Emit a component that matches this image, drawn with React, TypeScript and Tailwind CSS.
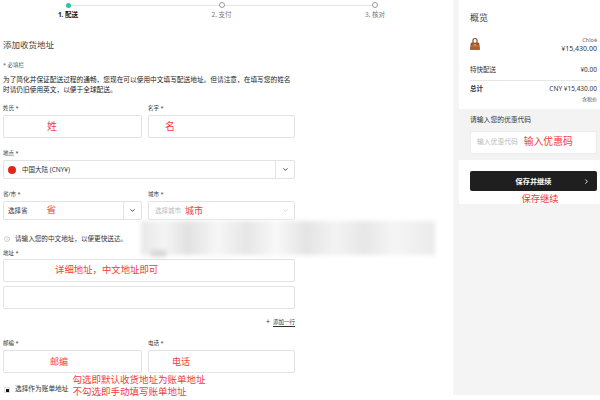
import { ChevronDown, ChevronRight, Info } from "lucide-react";
import type { ReactNode } from "react";

const red = "text-[#f43b3b]";

function Label({ children }: { children: ReactNode }) {
  return <div className="text-[5.5px] leading-[8px] text-[#333]">{children} *</div>;
}

function Box({ className = "", children }: { className?: string; children?: ReactNode }) {
  return (
    <div className={`flex items-center rounded-[2px] border border-[#e3e3e3] bg-white ${className}`}>
      {children}
    </div>
  );
}

function Step({ label, active }: { label: string; active?: boolean }) {
  return (
    <div className="flex w-[6px] flex-col items-center">
      {active ? (
        <div className="mt-[2.5px] h-[5px] w-[5px] rounded-full bg-[#2cc3a6]" />
      ) : (
        <div className="mt-[2px] h-[6px] w-[6px] rounded-full border border-[#999] bg-white" />
      )}
      <div
        className={`mt-[2px] whitespace-nowrap text-[6.5px] leading-[10px] ${
          active ? "font-bold text-[#111]" : "text-[#777]"
        }`}
      >
        {label}
      </div>
    </div>
  );
}

function Bag() {
  return (
    <svg width="10" height="14" viewBox="0 0 10 14">
      <path d="M3 6 V3.5 a2 2 0 0 1 4 0 V6" fill="none" stroke="#7a3e14" strokeWidth="1.1" />
      <path d="M1.2 6 H8.8 L9.6 12.5 H0.4 Z" fill="#b0602a" stroke="#6e3510" strokeWidth="0.6" />
      <path d="M1 9 H9" stroke="#d68a4e" strokeWidth="0.5" />
      <rect x="4.2" y="7.2" width="1.6" height="1.3" fill="#e7c07a" />
    </svg>
  );
}

function Row({ left, right, bold }: { left: string; right: string; bold?: boolean }) {
  return (
    <div className={`flex justify-between text-[6.5px] leading-[10px] text-[#333] ${bold ? "font-bold" : ""}`}>
      <span>{left}</span>
      <span className="font-normal">{right}</span>
    </div>
  );
}

export default function App() {
  return (
    <div className="flex h-[400px] w-[600px] overflow-hidden bg-white font-['Noto_Sans','Noto_Sans_CJK_SC',sans-serif]">
      {/* 左侧表单 */}
      <div className="relative w-[453px]">
        <div className="flex h-[22px] w-[378px] items-start pl-[65px]">
          <Step label="1. 配送" active />
          <div className="mt-[5px] h-px flex-1 bg-[#e4e4e4]" />
          <Step label="2. 支付" />
          <div className="mt-[5px] h-px flex-1 bg-[#e4e4e4]" />
          <Step label="3. 核对" />
        </div>

        <div className="w-[296px] pl-[3px]">
          <div className="mt-[17px] text-[8.5px] leading-[12px] text-[#444]">添加收货地址</div>
          <div className="mt-[10px] text-[5.5px] leading-[8px] text-[#555]">* 必填栏</div>
          <p className="mt-[6px] text-[6.7px] leading-[9.5px] text-[#222]">
            为了简化并保证配送过程的通畅，您现在可以使用中文填写配送地址。但请注意，在填写您的姓名时请仍旧使用英文，以便于全球配送。
          </p>

          <div className="mt-[10px] grid grid-cols-[139px_147px] gap-x-[6px]">
            <div>
              <Label>姓氏</Label>
              <Box className="mt-[3px] h-[23px] pl-[43px]">
                <span className={`${red} text-[10px]`}>姓</span>
              </Box>
            </div>
            <div>
              <Label>名字</Label>
              <Box className="mt-[3px] h-[23px] pl-[16px]">
                <span className={`${red} text-[10px]`}>名</span>
              </Box>
            </div>
          </div>

          <div className="mt-[11px] w-[292px]">
            <Label>地点</Label>
            <Box className="mt-[3px] h-[19px]">
              <div className="ml-[4px] h-[8px] w-[8px] rounded-full bg-[#e3261c]" />
              <span className="ml-[6px] flex-1 text-[6.5px] text-[#333]">中国大陆 (CNY¥)</span>
              <div className="flex h-full w-[19px] items-center justify-center border-l border-[#e3e3e3]">
                <ChevronDown size={7} strokeWidth={3} className="text-[#333]" />
              </div>
            </Box>
          </div>

          <div className="mt-[11px] grid grid-cols-[139px_147px] gap-x-[6px]">
            <div>
              <Label>省/市</Label>
              <Box className="mt-[3px] h-[19px]">
                <span className="ml-[4px] text-[6.5px] text-[#333]">选择省</span>
                <span className={`${red} ml-[19px] flex-1 text-[9.5px]`}>省</span>
                <div className="flex h-full w-[18px] items-center justify-center border-l border-[#e3e3e3]">
                  <ChevronDown size={7} strokeWidth={3} className="text-[#333]" />
                </div>
              </Box>
            </div>
            <div>
              <Label>城市</Label>
              <Box className="mt-[3px] h-[19px]">
                <span className="ml-[6px] text-[6.5px] text-[#bbb]">选择城市</span>
                <span className={`${red} ml-[4px] flex-1 text-[9px]`}>城市</span>
                <div className="flex w-[18px] justify-center">
                  <ChevronDown size={7} strokeWidth={2} className="text-[#bbb]" />
                </div>
              </Box>
            </div>
          </div>

          <div className="mt-[14px] flex items-center text-[6.6px] leading-[10px] text-[#333]">
            <Info size={6} strokeWidth={1.5} className="ml-[1px] text-[#888]" />
            <span className="ml-[5px]">请输入您的中文地址，以便更快送达。</span>
          </div>

          <div className="mt-[5px] w-[292px]">
            <Label>地址</Label>
            <Box className="mt-[2px] h-[23px] pl-[51px]">
              <span className={`${red} text-[9.4px]`}>详细地址，中文地址即可</span>
            </Box>
            <Box className="mt-[4px] h-[23px]" />
          </div>

          <div className="mt-[8px] flex w-[292px] justify-end text-[5.5px] leading-[10px] text-[#333]">
            <span className="mr-[3px] text-[7px] leading-[10px]">+</span>
            <span className="underline underline-offset-2">添加一行</span>
          </div>

          <div className="mt-[12px] grid grid-cols-[139px_147px] gap-x-[6px]">
            <div>
              <Label>邮编</Label>
              <Box className="mt-[3px] h-[23px] pl-[46px]">
                <span className={`${red} text-[9px]`}>邮编</span>
              </Box>
            </div>
            <div>
              <Label>电话</Label>
              <Box className="mt-[3px] h-[23px] pl-[23px]">
                <span className={`${red} text-[9px]`}>电话</span>
              </Box>
            </div>
          </div>

          <div className="mt-[1px] flex items-start">
            <div className="ml-[1px] mt-[13px] flex h-[6px] w-[6px] items-center justify-center border border-[#ddd]">
              <div className="h-[3px] w-[3px] bg-[#111]" />
            </div>
            <span className="ml-[5px] mt-[11px] text-[6.7px] leading-[8px] text-[#333]">选择作为账单地址</span>
            <div className={`${red} ml-[4px] text-[9.5px] leading-[12px]`}>
              <div>勾选即默认收货地址为账单地址</div>
              <div>不勾选即手动填写账单地址</div>
            </div>
          </div>
        </div>

        {/* 打码区域 */}
        <div className="absolute left-[141px] top-[221px] h-[34px] w-[294px] bg-[linear-gradient(90deg,#e8e8e8,#f4f4f4_8%,#e2e2e2_16%,#f6f6f6_26%,#e6e6e6_36%,#f8f8f8_46%,#e4e4e4_56%,#f3f3f3_66%,#e7e7e7_76%,#f5f5f5_86%,#ebebeb)] blur-[2px]">
          <div className="absolute bottom-[-2px] left-[9px] h-[7px] w-[17px] rounded-full bg-[#d8d8d8]" />
        </div>
      </div>

      {/* 右侧概览 */}
      <div className="h-[395px] w-[147px] bg-[#f4f4f4]">
        <div className="ml-[6px] bg-white">
          <div className="pb-[7px] pl-[11px] pr-[3px] pt-[12px]">
            <div className="text-[9px] leading-[12px] text-[#444]">概览</div>
            <div className="mt-[12px] flex justify-between">
              <div className="mt-[1px]">
                <Bag />
              </div>
              <div className="text-right text-[#333]">
                <div className="text-[5.5px] leading-[8px] text-[#666]">Chloé</div>
                <div className="text-[7px] leading-[9px]">¥15,430.00</div>
              </div>
            </div>
            <div className="mt-[12px]">
              <Row left="特快配送" right="¥0.00" />
            </div>
            <div className="mt-[5px] h-px bg-[#e6e6e6]" />
            <div className="mt-[3px]">
              <Row left="总计" right="CNY ¥15,430.00" bold />
            </div>
            <div className="mt-[2px] text-right text-[5px] leading-[6px] text-[#555]">含税价</div>
          </div>

          <div className="bg-[#f3f3f3] pb-[6px] pl-[11px] pr-[3px] pt-[6px]">
            <div className="text-[6.8px] leading-[10px] text-[#333]">请输入您的优惠代码</div>
            <Box className="mt-[6px] h-[23px] border-[#ececec] pl-[6px]">
              <span className="text-[6.8px] text-[#bbb]">输入优惠代码</span>
              <span className={`${red} ml-[6px] text-[9.8px]`}>输入优惠码</span>
            </Box>
          </div>

          <div className="pl-[11px] pr-[3px] pt-[11px]">
            <div className="relative flex h-[20px] items-center justify-center rounded-[2px] bg-[#1f1f1f]">
              <span className="text-[7.2px] font-bold text-white">保存并继续</span>
              <ChevronRight size={7} strokeWidth={3} className="absolute right-[7px] text-white" />
            </div>
            <div className={`${red} mt-[3px] pl-[13px] text-center text-[9.3px] leading-[10px]`}>保存继续</div>
          </div>
        </div>
      </div>
    </div>
  );
}
